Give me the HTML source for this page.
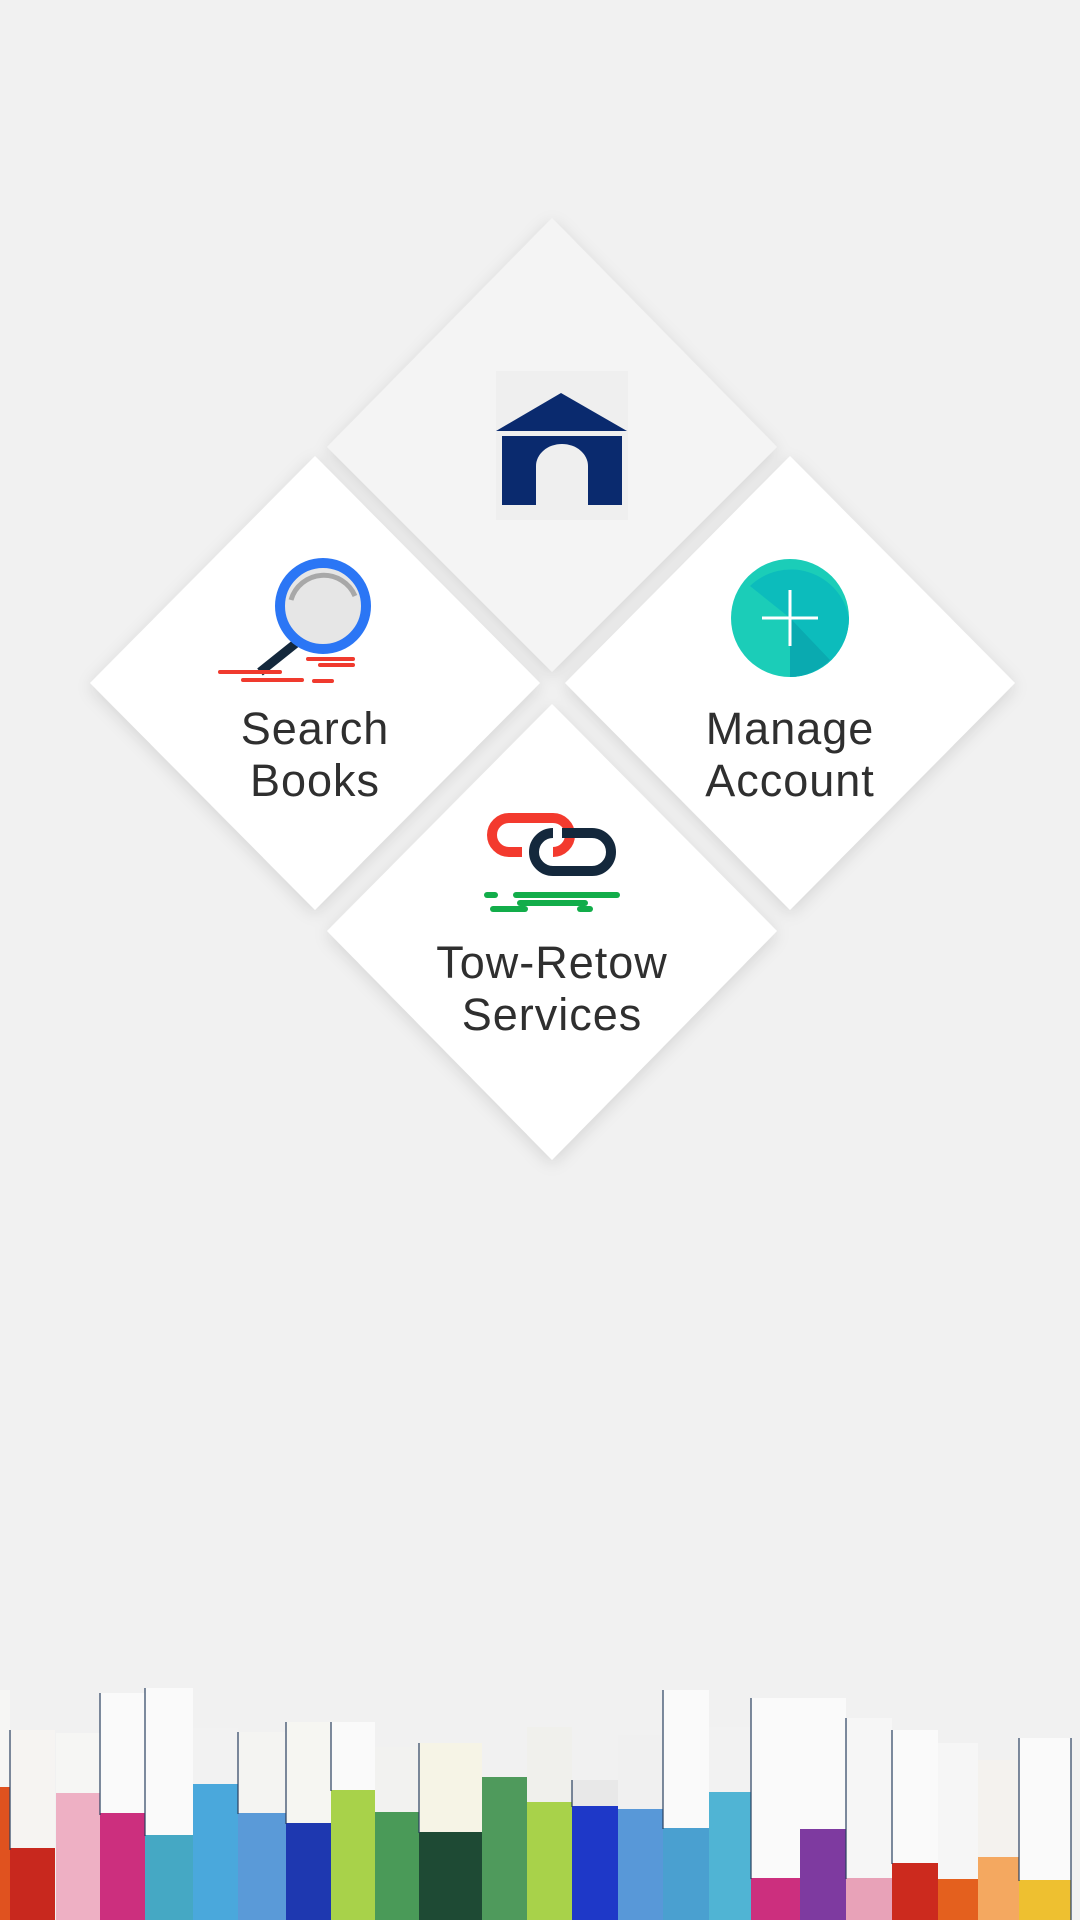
<!DOCTYPE html>
<html><head><meta charset="utf-8"><style>
html,body{margin:0;padding:0;width:1080px;height:1920px;background:#f1f1f1;overflow:hidden;font-family:"Liberation Sans",sans-serif}
svg{position:absolute;left:0;top:0}
.t{font-family:"Liberation Sans",sans-serif;font-size:45px;fill:#2f2f2f;text-anchor:middle;letter-spacing:1px}
</style></head><body>
<svg width="1080" height="1920" viewBox="0 0 1080 1920">
<defs>
<filter id="sh" x="-20%" y="-20%" width="140%" height="140%"><feDropShadow dx="0" dy="4" stdDeviation="8" flood-color="#000" flood-opacity="0.12"/></filter>
</defs>
<g filter="url(#sh)">
<polygon points="552,218 777,447 552,672 327,447" fill="#f4f4f4"/>
<polygon points="315,456 540,683 315,910 90,683" fill="#fff"/>
<polygon points="790,456 1015,683 790,910 565,683" fill="#fff"/>
<polygon points="552,704 777,931 552,1160 327,931" fill="#fff"/>
</g>
<!-- home -->
<rect x="496" y="371" width="132" height="149" fill="#efefef"/>
<polygon points="561,393 627,431 496,431" fill="#0a2a6e"/>
<rect x="502" y="436" width="120" height="69" fill="#0a2a6e"/>
<path d="M536,505 V466 A26,22 0 0 1 588,466 V505 Z" fill="#efefef"/>
<!-- magnifier -->
<line x1="300" y1="640" x2="260" y2="672" stroke="#14283c" stroke-width="9"/>
<circle cx="323" cy="606" r="43" fill="#e6e6e6" stroke="#2b76f5" stroke-width="10"/>
<path d="M291,600 A34,34 0 0 1 355,596" stroke="#a8a8a8" stroke-width="5" fill="none"/>
<g stroke="#f03a2e" stroke-width="4" stroke-linecap="round">
<line x1="220" y1="672" x2="280" y2="672"/><line x1="243" y1="680" x2="302" y2="680"/>
<line x1="314" y1="681" x2="332" y2="681"/><line x1="308" y1="659" x2="353" y2="659"/>
<line x1="320" y1="665" x2="353" y2="665"/>
</g>
<!-- plus -->
<circle cx="790" cy="618" r="59" fill="#1bcdb8"/>
<path d="M750,586 A59,59 0 0 1 849,618 A59,59 0 0 1 790,677 V618 Z" fill="#0cbcbc"/>
<path d="M790,618 L830,660 A59,59 0 0 1 790,677 Z" fill="#0aaab0"/>
<line x1="790" y1="590" x2="790" y2="646" stroke="#fff" stroke-width="3"/>
<line x1="762" y1="618" x2="818" y2="618" stroke="#fff" stroke-width="3"/>
<!-- chain -->
<path d="M522,852 H509 A17,17 0 0 1 509,818 H553 A17,17 0 0 1 553,852" stroke="#f33a2e" stroke-width="10" fill="none"/>
<path d="M562,833 H592 A19,19 0 0 1 592,871 H553 A19,19 0 0 1 553,833" stroke="#14283c" stroke-width="10" fill="none"/>
<g stroke="#12ad4a" stroke-width="6" stroke-linecap="round">
<line x1="487" y1="895" x2="495" y2="895"/><line x1="516" y1="895" x2="617" y2="895"/>
<line x1="493" y1="909" x2="525" y2="909"/><line x1="520" y1="903" x2="585" y2="903"/><line x1="580" y1="909" x2="590" y2="909"/>
</g>
<text class="t" x="315" y="744">Search</text>
<text class="t" x="315" y="796">Books</text>
<text class="t" x="790" y="744">Manage</text>
<text class="t" x="790" y="796">Account</text>
<text class="t" x="552" y="978">Tow-Retow</text>
<text class="t" x="552" y="1030">Services</text>
<!-- books -->
<g id="books">
<rect x="0" y="1690" width="10" height="100" fill="#f6f6f4"/><rect x="0" y="1787" width="10" height="133" fill="#e0521f"/>
<rect x="10" y="1730" width="45" height="120" fill="#f6f4f2"/><rect x="10" y="1848" width="45" height="72" fill="#c8281e"/>
<rect x="56" y="1733" width="44" height="62" fill="#f6f6f4"/><rect x="56" y="1793" width="44" height="127" fill="#eeb0c4"/>
<rect x="100" y="1693" width="45" height="122" fill="#fafafa"/><rect x="100" y="1813" width="45" height="107" fill="#cc2f7e"/>
<rect x="145" y="1688" width="48" height="148" fill="#fafafa"/><rect x="145" y="1835" width="48" height="85" fill="#45a8c4"/>
<rect x="193" y="1728" width="45" height="57" fill="#f2f2f2"/><rect x="193" y="1784" width="45" height="136" fill="#4aa8dc"/>
<rect x="238" y="1732" width="48" height="82" fill="#f4f4f2"/><rect x="238" y="1813" width="48" height="107" fill="#5a9ad8"/>
<rect x="286" y="1722" width="45" height="102" fill="#f6f6f2"/><rect x="286" y="1823" width="45" height="97" fill="#1e38b0"/>
<rect x="331" y="1722" width="44" height="69" fill="#fafafa"/><rect x="331" y="1790" width="44" height="130" fill="#a8d24a"/>
<rect x="375" y="1747" width="44" height="66" fill="#f2f2f0"/><rect x="375" y="1812" width="44" height="108" fill="#4a9a58"/>
<rect x="419" y="1743" width="63" height="90" fill="#f6f4e6"/><rect x="419" y="1832" width="63" height="88" fill="#1e4a34"/>
<rect x="482" y="1777" width="45" height="143" fill="#4f9a5c"/>
<rect x="527" y="1727" width="45" height="76" fill="#f0f0ec"/><rect x="527" y="1802" width="45" height="118" fill="#a8d24a"/>
<rect x="572" y="1780" width="46" height="27" fill="#e8e8e8"/><rect x="572" y="1806" width="46" height="114" fill="#1e38c8"/>
<rect x="618" y="1735" width="45" height="75" fill="#f0f0f0"/><rect x="618" y="1809" width="45" height="111" fill="#5898d8"/>
<rect x="663" y="1690" width="46" height="139" fill="#fafafa"/><rect x="663" y="1828" width="46" height="92" fill="#4aa0d0"/>
<rect x="709" y="1727" width="42" height="66" fill="#f2f2f2"/><rect x="709" y="1792" width="42" height="128" fill="#50b4d4"/>
<rect x="751" y="1698" width="49" height="181" fill="#fafafa"/><rect x="751" y="1878" width="49" height="42" fill="#cc2f7e"/>
<rect x="800" y="1698" width="46" height="132" fill="#fafafa"/><rect x="800" y="1829" width="46" height="91" fill="#7e3aa0"/>
<rect x="846" y="1718" width="46" height="161" fill="#f6f6f6"/><rect x="846" y="1878" width="46" height="42" fill="#e8a2b8"/>
<rect x="892" y="1730" width="46" height="134" fill="#fafafa"/><rect x="892" y="1863" width="46" height="57" fill="#cc2a1e"/>
<rect x="938" y="1743" width="40" height="137" fill="#f6f6f6"/><rect x="938" y="1879" width="40" height="41" fill="#e4601e"/>
<rect x="978" y="1760" width="41" height="98" fill="#f4f2ee"/><rect x="978" y="1857" width="41" height="63" fill="#f4a860"/>
<rect x="1019" y="1738" width="52" height="143" fill="#fafafa"/><rect x="1019" y="1880" width="52" height="40" fill="#eec030"/>
</g>
<g stroke="#2a4060" stroke-width="2" opacity="0.6">
<line x1="10" y1="1730" x2="10" y2="1850"/><line x1="100" y1="1693" x2="100" y2="1815"/><line x1="145" y1="1688" x2="145" y2="1836"/>
<line x1="238" y1="1732" x2="238" y2="1814"/><line x1="286" y1="1722" x2="286" y2="1824"/><line x1="331" y1="1722" x2="331" y2="1791"/>
<line x1="419" y1="1743" x2="419" y2="1833"/><line x1="572" y1="1780" x2="572" y2="1807"/><line x1="663" y1="1690" x2="663" y2="1829"/>
<line x1="751" y1="1698" x2="751" y2="1879"/><line x1="846" y1="1718" x2="846" y2="1879"/><line x1="892" y1="1730" x2="892" y2="1864"/>
<line x1="1019" y1="1738" x2="1019" y2="1881"/><line x1="1071" y1="1738" x2="1071" y2="1920"/>
</g>
</svg>
</body></html>
